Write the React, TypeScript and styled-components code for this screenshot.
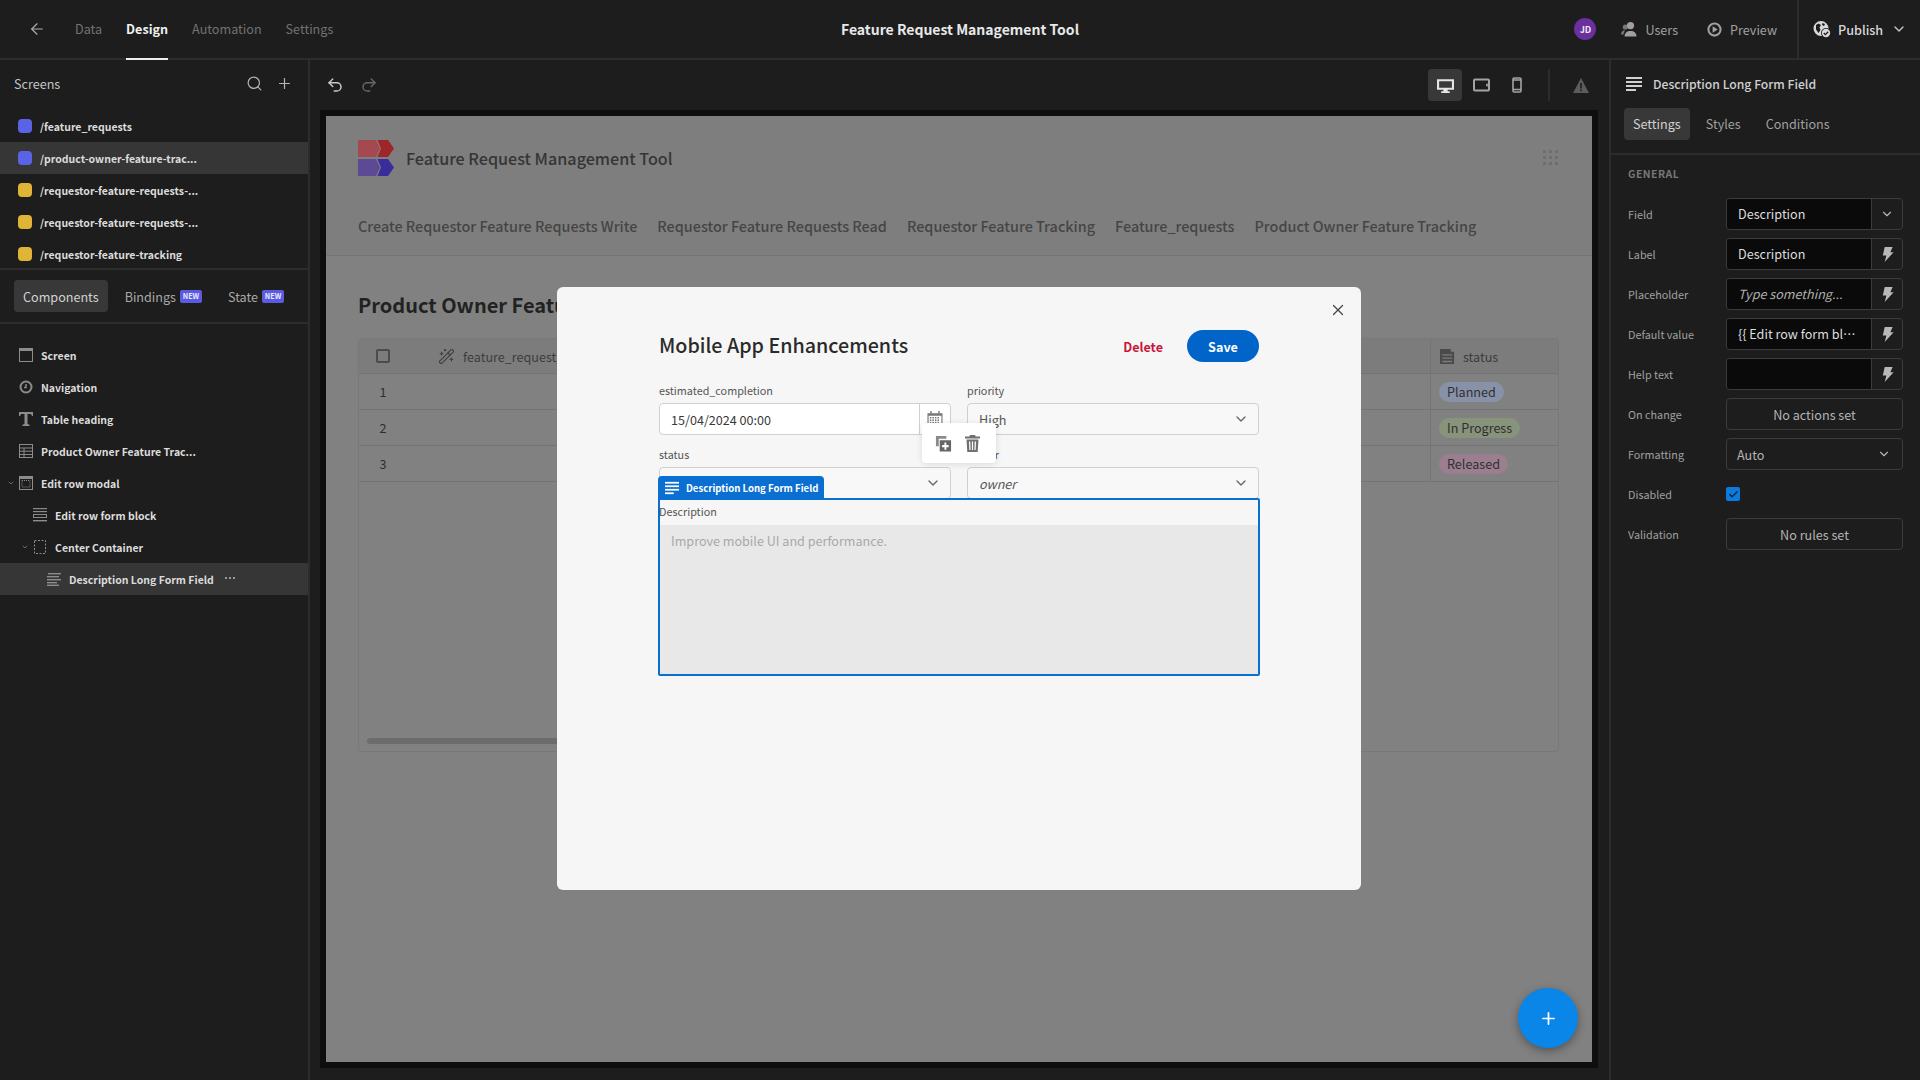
import React from "react";
import styled, { createGlobalStyle } from "styled-components";
import {
  ArrowLeft, ChevronDown, Plus, Redo2, Search, Undo2, Check, X, WandSparkles,
} from "lucide-react";

const FONT = `"Noto Sans CJK SC", "Noto Sans", sans-serif`;

const Global = createGlobalStyle`
  html, body { margin: 0; padding: 0; background: #1d1d1d; }
  body { font-family: ${FONT}; overflow: hidden; }
  * { box-sizing: border-box; }
`;

const Page = styled.div`
  width: 1920px; height: 1080px; display: flex; flex-direction: column; background: #1d1d1d; color: #ddd;
`;

/* ---------- top bar ---------- */
const TopBar = styled.header`
  height: 60px; flex: none; display: flex; align-items: center; position: relative;
  border-bottom: 2px solid #2c2c2c; padding-left: 28px;
`;
const BackBtn = styled.span`display: flex; color: #b0b0b0; width: 47px;`;
const TopTabs = styled.nav`display: flex; gap: 24px; height: 58px;`;
const TopTab = styled.span<{ $on?: boolean }>`
  display: flex; align-items: center; font-size: 12.6px; line-height: 20px; height: 60px; margin-bottom: -2px;
  font-weight: ${(p) => (p.$on ? 700 : 400)}; color: ${(p) => (p.$on ? "#f0f0f0" : "#727272")};
  border-bottom: 2px solid ${(p) => (p.$on ? "#eee" : "transparent")};
`;
const AppName = styled.div`
  position: absolute; left: 0; right: 0; top: 0; height: 58px; display: flex; align-items: center;
  justify-content: center; font-size: 14px; font-weight: 700; color: #e8e8e8; pointer-events: none;
`;
const TopRight = styled.div`margin-left: auto; display: flex; align-items: center; height: 58px;`;
const Avatar = styled.span`
  width: 22px; height: 22px; border-radius: 50%; background: #6b2f9f; color: #eee; font-size: 9px; font-weight: 700;
  display: flex; align-items: center; justify-content: center; margin-right: 25px;
`;
const TopAction = styled.span<{ $after: number }>`
  display: flex; align-items: center; gap: 8px; font-size: 12.6px; color: #a0a0a0; margin-right: ${(p) => p.$after}px;
`;
const PublishBox = styled.div`
  height: 58px; width: 123px; border-left: 2px solid #2c2c2c; display: flex; align-items: center; padding-left: 14px;
  gap: 7px; font-size: 12.6px; font-weight: 500; color: #d8d8d8;
`;
const PublishChevron = styled.span`display: flex; margin-left: 1px; color: #c8c8c8;`;

/* ---------- body ---------- */
const Body = styled.div`flex: 1; display: flex; min-height: 0;`;

const LeftPanel = styled.aside`
  width: 310px; flex: none; border-right: 2px solid #2c2c2c; display: flex; flex-direction: column;
`;
const ScreensHead = styled.div`
  height: 46px; display: flex; align-items: center; padding: 0 15px 0 14px; font-size: 12.6px; color: #c4c4c4;
`;
const HeadIcons = styled.span`margin-left: auto; display: flex; gap: 13px; color: #b4b4b4;`;
const ScreenList = styled.div`padding-top: 4px; display: flex; flex-direction: column; height: 164px; border-bottom: 2px solid #2c2c2c;`;
const ScreenRow = styled.div<{ $on?: boolean }>`
  height: 32px; flex: none; display: flex; align-items: center; padding-left: 18px; gap: 8px;
  background: ${(p) => (p.$on ? "#363636" : "transparent")};
  font-size: 10.5px; font-weight: 700; color: #dcdcdc;
`;
const ScreenDot = styled.span<{ $c: string }>`width: 14px; height: 14px; border-radius: 4px; background: ${(p) => p.$c}; flex: none;`;
const LeftTabs = styled.div`
  height: 54px; display: flex; align-items: center; padding-left: 14px; border-bottom: 2px solid #2c2c2c;
  font-size: 12.6px; color: #a8a8a8;
`;
const PillTab = styled.span<{ $on?: boolean; $gap?: number }>`
  height: 32px; padding: 0 9px; border-radius: 4px; display: inline-flex; align-items: center;
  margin-left: ${(p) => p.$gap ?? 0}px;
  background: ${(p) => (p.$on ? "#383838" : "transparent")}; color: ${(p) => (p.$on ? "#d2d2d2" : "#a8a8a8")};
`;
const NewBadge = styled.span`
  background: #5b5be0; color: #e8e8ff; font-size: 7.2px; font-weight: 700; height: 13px; width: 22px; margin-left: 4px;
  border-radius: 2px; display: inline-flex; align-items: center; justify-content: center;
`;
const Tree = styled.div`padding-top: 15px; display: flex; flex-direction: column;`;
const TreeRow = styled.div<{ $depth: number; $on?: boolean }>`
  height: 32px; display: flex; align-items: center; position: relative; gap: 8px;
  padding-left: ${(p) => 19 + p.$depth * 14}px;
  background: ${(p) => (p.$on ? "#363636" : "transparent")};
  font-size: 10.5px; font-weight: 700; color: #dcdcdc;
`;
const TreeIcon = styled.svg`width: 14px; height: 14px; flex: none; color: #8c8c8c;`;
const Caret = styled.span<{ $depth: number }>`
  position: absolute; left: ${(p) => 7 + p.$depth * 14}px; display: flex; color: #909090;
`;
const Dots = styled.span`margin-left: 3px; display: flex; gap: 1.5px; padding-bottom: 2px;`;
const Dot = styled.span`width: 2.5px; height: 2.5px; border-radius: 50%; background: #bbb;`;

/* ---------- center ---------- */
const Center = styled.main`flex: 1; display: flex; flex-direction: column; min-width: 0;`;
const Toolbar = styled.div`height: 50px; flex: none; display: flex; align-items: center; padding: 0 20px 0 16px;`;
const UndoGroup = styled.div`display: flex; gap: 16px; color: #c8c8c8; margin-bottom: 1px;`;
const RedoIcon = styled.span`display: flex; color: #666;`;
const DeviceGroup = styled.div`margin-left: auto; display: flex; gap: 2px; align-items: center;`;
const DeviceBtn = styled.span<{ $on?: boolean }>`
  width: 34px; height: 32px; border-radius: 4px; display: flex; align-items: center; justify-content: center;
  background: ${(p) => (p.$on ? "#383838" : "transparent")}; color: ${(p) => (p.$on ? "#e4e4e4" : "#a4a4a4")};
`;
const ToolDivider = styled.span`width: 2px; height: 32px; background: #2c2c2c; margin: 0 21px 0 12px;`;

const CanvasFrame = styled.div`
  flex: 1; margin: 0 11px 12px 10px; border: 6px solid #0e0e0e; position: relative; display: flex; flex-direction: column;
  background: #818181; min-height: 0; color: #3a3a3a;
`;
const AppHeader = styled.div`
  height: 140px; flex: none; padding: 24px 33px 0 32px; border-bottom: 1px solid #747474; background: #7e7e7e;
`;
const BrandRow = styled.div`display: flex; align-items: center; gap: 12px;`;
const BrandName = styled.span`font-size: 16.15px; font-weight: 500; color: #353535; margin-top: -1px;`;
const GridWrap = styled.span`margin-left: auto; display: flex;`;
const AppNav = styled.div`
  display: flex; gap: 20px; margin-top: 38px; font-size: 14.4px; line-height: 24px; font-weight: 500; color: #454545; white-space: nowrap;
`;
const AppMain = styled.div`padding: 33px 0 0 32px;`;
const TableTitle = styled.div`font-size: 20px; line-height: 32px; font-weight: 700; color: #222; margin-bottom: 17px;`;
const DataTable = styled.div`
  width: 1201px; height: 414px; border: 1px solid #787878; border-radius: 3px; position: relative;
`;
const TableRow = styled.div<{ $head?: boolean; $h: number }>`
  height: ${(p) => p.$h}px; display: grid; grid-template-columns: 1071px 1fr; border-bottom: 1px solid #747474;
  background: ${(p) => (p.$head ? "#7c7c7c" : "transparent")};
`;
const FirstCell = styled.div`display: flex; align-items: center; padding-left: 17px; font-size: 12.6px; color: #2e2e2e;`;
const RowNumber = styled.span`width: 14px; text-align: center;`;
const Checkbox = styled.span`width: 14px; height: 14px; border: 2px solid #4c4c4c; border-radius: 2px; flex: none;`;
const HeadField = styled.span`display: flex; align-items: center; gap: 8px; margin-left: 48px; color: #3c3c3c; font-size: 12.6px;`;
const StatusCell = styled.div`
  border-left: 1px solid #747474; display: flex; align-items: center; padding-left: 9px; gap: 8px; color: #3c3c3c; font-size: 12.6px;
`;
const PillCell = styled(StatusCell)`padding-left: 8px;`;
const Pill = styled.span<{ $c: string }>`
  height: 20px; padding: 0 8px; border-radius: 10px; background: ${(p) => p.$c}; color: #303030; font-size: 12.6px; display: flex; align-items: center;
`;
const ScrollThumb = styled.span`
  position: absolute; left: 8px; bottom: 7px; width: 200px; height: 6px; border-radius: 3px; background: #6c6c6c;
`;

const Fab = styled.span`
  position: absolute; right: 14px; bottom: 14px; width: 60px; height: 60px; border-radius: 50%; background: #0a85e8;
  display: flex; align-items: center; justify-content: center; color: #fff; box-shadow: 0 3px 8px rgba(0,0,0,.35); z-index: 3;
`;

/* ---------- modal ---------- */
const Overlay = styled.div`
  position: absolute; inset: 0; display: flex; justify-content: center; padding-top: 171px; z-index: 2;
`;
const Modal = styled.div`
  width: 804px; height: 603px; background: #f6f6f6; border-radius: 6px; position: relative; padding: 43px 102px 0;
  color: #2c2c2c;
`;
const CloseBtn = styled.span`position: absolute; top: 14px; right: 14px; display: flex; color: #444;`;
const ModalHead = styled.div`height: 32px; display: flex; align-items: center;`;
const ModalTitle = styled.span`font-size: 19.7px; font-weight: 500; color: #2a2a2a; margin-top: -3px;`;
const DeleteBtn = styled.span`margin-left: auto; font-size: 12.6px; font-weight: 700; color: #c9163c;`;
const SaveBtn = styled.span`
  margin-left: 24px; width: 72px; height: 32px; border-radius: 16px; background: #0064c8; color: #fff; font-size: 12.6px; font-weight: 700;
  display: flex; align-items: center; justify-content: center;
`;
const FormGrid = styled.div`
  display: grid; grid-template-columns: 292px 292px; column-gap: 16px; row-gap: 12px; margin-top: 21px; position: relative;
`;
const FieldLabel = styled.div`font-size: 10.8px; line-height: 16px; height: 16px; margin: -1px 0 5px; color: #555;`;
const InputBox = styled.div`
  height: 32px; background: #fff; border: 1px solid #d0d0d0; border-radius: 4px; display: flex; align-items: center;
  font-size: 12.6px; color: #3a3a3a; padding-left: 11px;
`;
const SelectBox = styled(InputBox)`background: #f8f8f8; color: #555; padding-right: 9px; justify-content: space-between;`;
const Italic = styled.span`font-style: italic;`;
const CalBtn = styled.span`
  margin-left: auto; width: 31px; height: 100%; border-left: 1px solid #d0d0d0; display: flex; align-items: center; justify-content: center; color: #777;
`;
const ChevGrey = styled.span`display: flex; color: #666;`;
const FloatBar = styled.div`
  position: absolute; left: 263px; top: 40px; width: 74px; height: 40px; background: #fff; border-radius: 4px; z-index: 2; padding: 1px 3px 0 0;
  box-shadow: 0 1px 6px rgba(0,0,0,.12); display: flex; align-items: center; justify-content: center; gap: 13px; color: #6a6a6a;
`;
const SelectedField = styled.div`
  position: relative; margin: -1px -1px 0; height: 178px; border: 2px solid #0a6fd0; border-radius: 2px; z-index: 1; background: #f6f6f6;
`;
const FieldTag = styled.div`
  position: absolute; left: -2px; top: -24px; height: 24px; width: 166px; background: #0a6fd0; color: #fff; border-radius: 4px 4px 0 0;
  display: flex; align-items: center; gap: 7px; padding-left: 7px; font-size: 9.6px; font-weight: 700; white-space: nowrap;
`;
const DescLabel = styled.div`font-size: 10.8px; line-height: 16px; color: #555; margin: 3px 0 6px -1px; height: 16px;`;
const TextArea = styled.div`
  height: 149px; background: #e8e8e8; padding: 6px 11px; font-size: 12.6px; line-height: 20px; color: #a8a8a8;
`;

/* ---------- right panel ---------- */
const RightPanel = styled.aside`
  width: 311px; flex: none; border-left: 2px solid #2c2c2c; display: flex; flex-direction: column;
`;
const PropHead = styled.div`
  height: 47px; flex: none; display: flex; align-items: center; gap: 11px; padding-left: 15px; font-size: 12.2px; color: #d0d0d0; font-weight: 500;
`;
const PropTabs = styled.div`
  display: flex; gap: 7px; height: 48px; padding: 1px 0 15px 13px; border-bottom: 2px solid #2c2c2c; flex: none;
`;
const PropTab = styled.span<{ $on?: boolean }>`
  height: 32px; padding: 0 9px 1px; border-radius: 4px; display: flex; align-items: center; font-size: 12.6px;
  background: ${(p) => (p.$on ? "#383838" : "transparent")}; color: ${(p) => (p.$on ? "#d2d2d2" : "#a0a0a0")};
`;
const PropBody = styled.div`padding: 11px 17px 0 17px; display: flex; flex-direction: column; gap: 8px;`;
const SectionTitle = styled.div`
  font-size: 10.5px; line-height: 16px; font-weight: 700; color: #777; letter-spacing: .04em; margin-bottom: 8px; height: 16px;
`;
const PropRow = styled.div`height: 32px; display: grid; grid-template-columns: 98px 1fr; align-items: center;`;
const PropLabel = styled.span`font-size: 10.8px; color: #a0a0a0;`;
const Combo = styled.div`
  height: 32px; border: 1px solid #3c3c3c; border-radius: 4px; display: flex; overflow: hidden; align-items: stretch; min-width: 0;
`;
const ComboText = styled.span<{ $ph?: boolean }>`
  flex: 1; min-width: 0; background: #0a0a0a; font-size: 12.6px; color: #dedede; display: flex; align-items: center; padding: 0 0 1px 11px;
  white-space: nowrap; overflow: hidden; ${(p) => (p.$ph ? "font-style: italic; color: #b0b0b0;" : "")}
`;
const Ellipsis = styled.span`overflow: hidden; text-overflow: ellipsis; padding-right: 12px;`;
const ComboBtn = styled.span`
  width: 31px; flex: none; border-left: 1px solid #3c3c3c; display: flex; align-items: center; justify-content: center; color: #b8b8b8;
`;
const GhostBtn = styled.div`
  height: 32px; border: 1px solid #3c3c3c; border-radius: 4px; display: flex; align-items: center; justify-content: center;
  font-size: 12.6px; color: #b4b4b4;
`;
const GhostSelect = styled(GhostBtn)`justify-content: space-between; padding: 0 11px 0 10px;`;
const CheckBoxOn = styled.span`
  width: 14px; height: 14px; border-radius: 2px; background: #0b7be0; display: flex; align-items: center; justify-content: center; color: #12233a;
`;

/* ---------- icons ---------- */
const I = ({ children, s = 14, w = 16 }: { children: React.ReactNode; s?: number; w?: number }) => (
  <svg width={s} height={s} viewBox={`0 0 ${w} ${w}`} fill="currentColor" style={{ flex: "none" }}>{children}</svg>
);
const LinesIcon = ({ s = 16 }: { s?: number }) => (
  <I s={s}><rect x="0" y="1" width="16" height="2" /><rect x="0" y="5" width="16" height="2" /><rect x="0" y="9" width="16" height="2" /><rect x="0" y="13" width="10" height="2" /></I>
);
const Bolt = () => (
  <I s={15}><path d="M5 0h8.500l-2.500 5.500H14.500L5 16l1.800-7H3z" /></I>
);
const UsersIcon = () => (
  <I s={16}><circle cx="9.500" cy="4.600" r="3.600" /><path d="M3.600 15.500c0-3.600 2.200-5.600 5.900-5.600s6 2 6 5.600z" /><circle cx="4.300" cy="6" r="2.600" opacity=".7" /><path d="M0 13.500c0-2.600 1.500-4.200 4-4.200l-1.600 4.200z" opacity=".7" /></I>
);
const PlayCircle = () => (
  <I s={15}><circle cx="8" cy="8" r="6.500" fill="none" stroke="currentColor" strokeWidth="2.200" /><path d="M6 4.600v6.800l5.400-3.400z" /></I>
);
const GlobeCheck = () => (
  <svg width="18" height="18" viewBox="0 0 18 18" style={{ flex: "none" }}>
    <path fill="#d8d8d8" d="M8 1a7.500 7.500 0 1 0 0 15A7.500 7.500 0 0 0 8 1zM3 5l2.500-1.500L8 5 6.500 7.500 7.500 10l-2 3L3 9.500zM9.500 3l2.500 1-1 2-2-1z" />
    <circle cx="13" cy="13" r="5" fill="#1d1d1d" /><circle cx="13" cy="13" r="4.200" fill="#d8d8d8" />
    <path d="M10.800 13l1.600 1.600 2.800-2.900" stroke="#1d1d1d" strokeWidth="1.300" fill="none" />
  </svg>
);
const DesktopIcon = () => (
  <I s={17}><path fillRule="evenodd" d="M0 2h16v10H10v1.500h2V15H4v-1.500h2V12H0zM2 4v6h12V4z" /></I>
);
const TabletIcon = () => (
  <svg width="17" height="14" viewBox="0 0 17 14" fill="none" stroke="currentColor" strokeWidth="2" style={{ flex: "none" }}>
    <rect x="1" y="1.500" width="15" height="11" rx="1" /><circle cx="14.500" cy="7" r=".6" />
  </svg>
);
const PhoneIcon = () => (
  <svg width="10" height="16" viewBox="0 0 10 16" fill="none" stroke="currentColor" strokeWidth="1.600" style={{ flex: "none" }}>
    <rect x="1" y="1" width="8" height="14" rx="1.200" /><path d="M1 3h8M1 12.500h8" />
  </svg>
);
const WarnIcon = () => (
  <svg width="16" height="15" viewBox="0 0 16 15" style={{ flex: "none" }}>
    <path fill="#5c5c5c" d="M8 0l8 15H0z" /><rect x="7.200" y="5" width="1.600" height="5.500" fill="#1d1d1d" /><rect x="7.200" y="11.500" width="1.600" height="1.600" fill="#1d1d1d" />
  </svg>
);
const AppGrid = () => (
  <svg width="16" height="16" viewBox="0 0 16 16" fill="#6e6e6e">
    {[1, 7, 13].flatMap((y) => [1, 7, 13].map((x) => <rect key={`${x}-${y}`} x={x - 1} y={y - 1} width="3" height="3" rx=".5" />))}
  </svg>
);
const Logo = () => (
  <svg width="36" height="36" viewBox="0 0 36 36" style={{ flex: "none" }}>
    <path fill="#a5484f" d="M0 0h18l4 8.500-4 8.500H0z" />
    <path fill="#9e262b" d="M19.500 0H30l6 8.500-6 8.500H19.500l3.500-8.500z" />
    <path fill="#5c4a94" d="M0 19h18l4 8.500-4 8.500H0z" />
    <path fill="#3b2c9c" d="M19.500 19H30l6 8.500-6 8.500H19.500l3.500-8.500z" />
  </svg>
);
const CalendarIcon = () => (
  <svg width="16" height="16" viewBox="0 0 17 17" style={{ flex: "none" }} fill="currentColor">
    <path fillRule="evenodd" d="M3.500 0H5v2.500h7V0h1.500v2.500H16.500v14H.5v-14h3zM1.700 5v10.300h13.600V5z" />
    {[6.400, 9, 11.600].flatMap((y) => [3, 5.700, 8.400, 11.100].map((x) => <rect key={`${x}-${y}`} x={x} y={y} width="1.600" height="1.600" />))}
  </svg>
);
const DuplicateIcon = () => (
  <svg width="17" height="17" viewBox="0 0 18 18" style={{ flex: "none" }}>
    <path fill="#8a8a8a" d="M1 1h11v3H4v8H1z" />
    <path fill="#666" fillRule="evenodd" d="M5 5.500h12v12H5zM10 8v2.500H7.500V13H10v2.500h2V13h2.500v-2.500H12V8z" />
  </svg>
);
const TrashIcon = () => (
  <svg width="15" height="17" viewBox="0 0 15 17" style={{ flex: "none" }} fill="#707070">
    <path d="M5 0h5l.8 1.600H15v1.800H0V1.600h4.200z" />
    <path fillRule="evenodd" d="M1.500 4.500h12L12.700 17H2.300zM4 6.500l.4 8.500h1.200l-.3-8.500zM6.900 6.500V15h1.200V6.500zM9.700 6.500L9.400 15h1.200l.4-8.500z" />
  </svg>
);
const StatusIcon = () => (
  <I s={15}><path fillRule="evenodd" d="M0 0h11l1 1-1 1 1 1h3v13H0zM2.500 5.500V7h10.500V5.500zM2.500 9v1.500h10.500V9zM2.500 12.500V14h10.500v-1.500z" fill="#4a4a4a" /></I>
);

const ScreenGlyph = () => (
  <TreeIcon viewBox="0 0 14 14"><rect x=".5" y=".5" width="13" height="13" fill="none" stroke="currentColor" /><rect x=".5" y=".5" width="13" height="2.500" fill="currentColor" /></TreeIcon>
);
const NavGlyph = () => (
  <TreeIcon viewBox="0 0 14 14"><circle cx="7" cy="7" r="5.500" fill="none" stroke="currentColor" strokeWidth="2" /><path d="M7 4v3.500h-2" fill="none" stroke="currentColor" strokeWidth="1.500" /></TreeIcon>
);
const HeadingGlyph = () => (
  <TreeIcon viewBox="0 0 14 14"><path fill="currentColor" d="M0 0h14v4h-1l-1-2H8.500v10l2 .8V14h-7v-1.200l2-.8V2H2L1 4H0z" /></TreeIcon>
);
const TableGlyph = () => (
  <TreeIcon viewBox="0 0 14 14" fill="none" stroke="currentColor"><rect x=".5" y=".5" width="13" height="13" /><path d="M.5 4h13M.5 7.200h13M.5 10.500h13M5 4v9.500" /></TreeIcon>
);
const ModalGlyph = () => (
  <TreeIcon viewBox="0 0 14 14" fill="none" stroke="currentColor"><rect x=".5" y=".5" width="13" height="13" /><rect x=".5" y=".5" width="13" height="2" fill="currentColor" /><rect x="3" y="4.500" width="8" height="6.500" strokeDasharray="1 1" /></TreeIcon>
);
const FormGlyph = () => (
  <TreeIcon viewBox="0 0 14 14" fill="currentColor"><rect y="0" width="14" height="1.200" /><rect y="3" width="14" height="1.200" /><rect x=".5" y="6.500" width="13" height="3" fill="none" stroke="currentColor" /><rect y="12" width="14" height="1.400" /></TreeIcon>
);
const DashGlyph = () => (
  <TreeIcon viewBox="0 0 14 14" fill="none" stroke="currentColor"><rect x="1.500" y=".5" width="11" height="13" strokeDasharray="2 1.500" /></TreeIcon>
);
const LongGlyph = () => (
  <TreeIcon viewBox="0 0 14 14" fill="currentColor"><rect x="1" y="1" width="13" height="1.400" /><rect y="4" width="12" height="1.400" /><rect y="7" width="14" height="1.400" /><rect y="10" width="10" height="1.400" /><rect y="12.600" width="12" height="1.400" /></TreeIcon>
);

const screens = [
  ["/feature_requests", "#5c62e6"],
  ["/product-owner-feature-trac...", "#5c62e6"],
  ["/requestor-feature-requests-...", "#dfb538"],
  ["/requestor-feature-requests-...", "#dfb538"],
  ["/requestor-feature-tracking", "#dfb538"],
];
const navItems = [
  "Create Requestor Feature Requests Write",
  "Requestor Feature Requests Read",
  "Requestor Feature Tracking",
  "Feature_requests",
  "Product Owner Feature Tracking",
];
const rows: [string, string, string][] = [
  ["1", "Planned", "#8792a8"],
  ["2", "In Progress", "#87937a"],
  ["3", "Released", "#9b7f90"],
];

export default function App() {
  return (
    <Page>
      <Global />
      <TopBar>
        <BackBtn><ArrowLeft size={18} strokeWidth={1.5} /></BackBtn>
        <TopTabs>
          <TopTab>Data</TopTab>
          <TopTab $on>Design</TopTab>
          <TopTab>Automation</TopTab>
          <TopTab>Settings</TopTab>
        </TopTabs>
        <AppName>Feature Request Management Tool</AppName>
        <TopRight>
          <Avatar>JD</Avatar>
          <TopAction $after={29}><UsersIcon />Users</TopAction>
          <TopAction $after={20}><PlayCircle />Preview</TopAction>
          <PublishBox><GlobeCheck />Publish<PublishChevron><ChevronDown size={16} /></PublishChevron></PublishBox>
        </TopRight>
      </TopBar>
      <Body>
        <LeftPanel>
          <ScreensHead>
            Screens
            <HeadIcons><Search size={17} strokeWidth={1.7} /><Plus size={17} strokeWidth={1.7} /></HeadIcons>
          </ScreensHead>
          <ScreenList>
            {screens.map(([t, c], i) => (
              <ScreenRow key={i} $on={i === 1}><ScreenDot $c={c} />{t}</ScreenRow>
            ))}
          </ScreenList>
          <LeftTabs>
            <PillTab $on>Components</PillTab>
            <PillTab $gap={8}>Bindings<NewBadge>NEW</NewBadge></PillTab>
            <PillTab $gap={8}>State<NewBadge>NEW</NewBadge></PillTab>
          </LeftTabs>
          <Tree>
            <TreeRow $depth={0}><ScreenGlyph />Screen</TreeRow>
            <TreeRow $depth={0}><NavGlyph />Navigation</TreeRow>
            <TreeRow $depth={0}><HeadingGlyph />Table heading</TreeRow>
            <TreeRow $depth={0}><TableGlyph />Product Owner Feature Trac...</TreeRow>
            <TreeRow $depth={0}><Caret $depth={0}><ChevronDown size={8} /></Caret><ModalGlyph />Edit row modal</TreeRow>
            <TreeRow $depth={1}><FormGlyph />Edit row form block</TreeRow>
            <TreeRow $depth={1}><Caret $depth={1}><ChevronDown size={8} /></Caret><DashGlyph />Center Container</TreeRow>
            <TreeRow $depth={2} $on><LongGlyph />Description Long Form Field<Dots><Dot /><Dot /><Dot /></Dots></TreeRow>
          </Tree>
        </LeftPanel>

        <Center>
          <Toolbar>
            <UndoGroup>
              <Undo2 size={18} strokeWidth={2} />
              <RedoIcon><Redo2 size={18} strokeWidth={2} /></RedoIcon>
            </UndoGroup>
            <DeviceGroup>
              <DeviceBtn $on><DesktopIcon /></DeviceBtn>
              <DeviceBtn><TabletIcon /></DeviceBtn>
              <DeviceBtn><PhoneIcon /></DeviceBtn>
              <ToolDivider />
              <WarnIcon />
            </DeviceGroup>
          </Toolbar>
          <CanvasFrame>
            <AppHeader>
              <BrandRow>
                <Logo />
                <BrandName>Feature Request Management Tool</BrandName>
                <GridWrap><AppGrid /></GridWrap>
              </BrandRow>
              <AppNav>{navItems.map((n) => <span key={n}>{n}</span>)}</AppNav>
            </AppHeader>
            <AppMain>
              <TableTitle>Product Owner Feature Tracking</TableTitle>
              <DataTable>
                <TableRow $head $h={35}>
                  <FirstCell><Checkbox /><HeadField><WandSparkles size={17} strokeWidth={1.5} />feature_request_name</HeadField></FirstCell>
                  <StatusCell><StatusIcon />status</StatusCell>
                </TableRow>
                {rows.map(([n, s, c]) => (
                  <TableRow key={n} $h={36}>
                    <FirstCell><RowNumber>{n}</RowNumber></FirstCell>
                    <PillCell><Pill $c={c}>{s}</Pill></PillCell>
                  </TableRow>
                ))}
                <ScrollThumb />
              </DataTable>
            </AppMain>

            <Overlay>
              <Modal>
                <CloseBtn><X size={18} strokeWidth={1.7} /></CloseBtn>
                <ModalHead>
                  <ModalTitle>Mobile App Enhancements</ModalTitle>
                  <DeleteBtn>Delete</DeleteBtn>
                  <SaveBtn>Save</SaveBtn>
                </ModalHead>
                <FormGrid>
                  <FloatBar><DuplicateIcon /><TrashIcon /></FloatBar>
                  <div>
                    <FieldLabel>estimated_completion</FieldLabel>
                    <InputBox>15/04/2024 00:00<CalBtn><CalendarIcon /></CalBtn></InputBox>
                  </div>
                  <div>
                    <FieldLabel>priority</FieldLabel>
                    <SelectBox>High<ChevGrey><ChevronDown size={16} /></ChevGrey></SelectBox>
                  </div>
                  <div>
                    <FieldLabel>status</FieldLabel>
                    <SelectBox><span /><ChevGrey><ChevronDown size={16} /></ChevGrey></SelectBox>
                  </div>
                  <div>
                    <FieldLabel>owner</FieldLabel>
                    <SelectBox><Italic>owner</Italic><ChevGrey><ChevronDown size={16} /></ChevGrey></SelectBox>
                  </div>
                </FormGrid>
                <SelectedField>
                  <FieldTag><LinesIcon s={14} />Description Long Form Field</FieldTag>
                  <DescLabel>Description</DescLabel>
                  <TextArea>Improve mobile UI and performance.</TextArea>
                </SelectedField>
              </Modal>
            </Overlay>
            <Fab><Plus size={19} strokeWidth={2.2} /></Fab>
          </CanvasFrame>
        </Center>

        <RightPanel>
          <PropHead><LinesIcon />Description Long Form Field</PropHead>
          <PropTabs>
            <PropTab $on>Settings</PropTab>
            <PropTab>Styles</PropTab>
            <PropTab>Conditions</PropTab>
          </PropTabs>
          <PropBody>
            <SectionTitle>GENERAL</SectionTitle>
            <PropRow><PropLabel>Field</PropLabel><Combo><ComboText>Description</ComboText><ComboBtn><ChevronDown size={14} /></ComboBtn></Combo></PropRow>
            <PropRow><PropLabel>Label</PropLabel><Combo><ComboText>Description</ComboText><ComboBtn><Bolt /></ComboBtn></Combo></PropRow>
            <PropRow><PropLabel>Placeholder</PropLabel><Combo><ComboText $ph>Type something...</ComboText><ComboBtn><Bolt /></ComboBtn></Combo></PropRow>
            <PropRow><PropLabel>Default value</PropLabel><Combo><ComboText><Ellipsis>{"{{ Edit row form block.Fields.Description }}"}</Ellipsis></ComboText><ComboBtn><Bolt /></ComboBtn></Combo></PropRow>
            <PropRow><PropLabel>Help text</PropLabel><Combo><ComboText /><ComboBtn><Bolt /></ComboBtn></Combo></PropRow>
            <PropRow><PropLabel>On change</PropLabel><GhostBtn>No actions set</GhostBtn></PropRow>
            <PropRow><PropLabel>Formatting</PropLabel><GhostSelect>Auto<ChevronDown size={14} /></GhostSelect></PropRow>
            <PropRow><PropLabel>Disabled</PropLabel><CheckBoxOn><Check size={11} strokeWidth={3} /></CheckBoxOn></PropRow>
            <PropRow><PropLabel>Validation</PropLabel><GhostBtn>No rules set</GhostBtn></PropRow>
          </PropBody>
        </RightPanel>
      </Body>
    </Page>
  );
}
